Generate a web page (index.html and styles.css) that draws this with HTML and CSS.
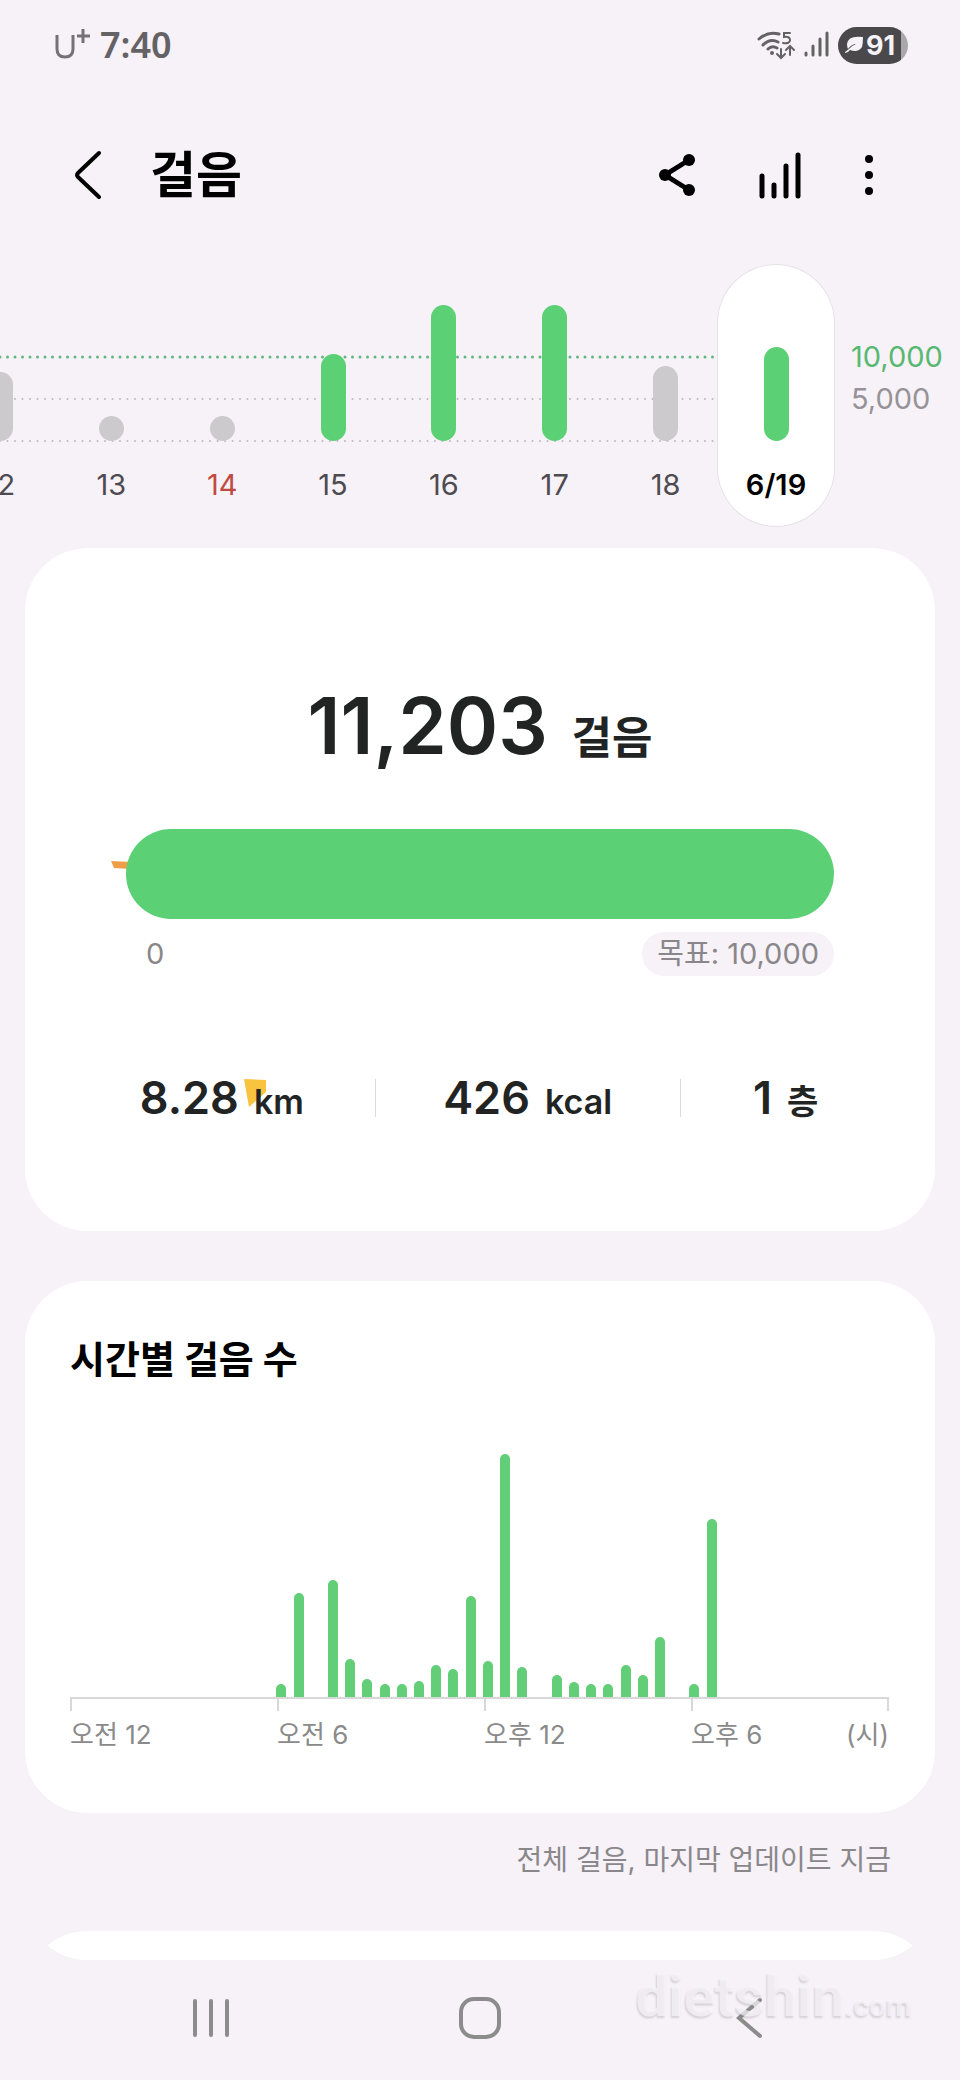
FILE: index.html
```
<!DOCTYPE html>
<html lang="ko">
<head>
    <meta charset="UTF-8">
    <meta name="viewport" content="width=device-width, initial-scale=1.0">
    <title>걸음</title>
    <link rel="stylesheet" href="styles.css">
</head>
<body>

    <!-- 상태 표시줄 -->
    <div class="status">
        <svg class="carrier" width="36" height="34" viewBox="0 0 36 34" role="img" aria-label="U+">
            <path d="M3 7v14q0 8 8 8t8-8V7M23 8h13M29 1v14"/>
        </svg>
        <span class="clock">7:40</span>
        <div class="status-icons">
            <svg width="38" height="32" viewBox="0 0 38 32" aria-hidden="true">
                <path class="line" d="M2 10Q11 2 22 5M6 16Q13 9 21 13M11 20Q15 16 20 19"/>
                <circle cx="15" cy="24" r="2"/>
                <path class="line thin" d="M33 4h-6v4q6-1 6 3t-7 3M24 20v8M20 25l4 4l4-4M33 26v-8M29 21l4-4l4 4"/>
            </svg>
            <svg width="25" height="32" viewBox="0 0 25 32" aria-hidden="true">
                <path class="line" d="M2 24v2M9 17v9M16 10v16M23 4v22"/>
            </svg>
            <div class="battery">
                <svg width="20" height="18" viewBox="0 0 20 18" aria-hidden="true">
                    <path class="leaf" d="M19 1Q4-1 3 8q0 3 1 5Q8 8 12 8Q7 10 5 13L1 16v1q3 0 5-3q8 3 12-3q1-4 1-10z"/>
                </svg>
                <span>91</span>
            </div>
        </div>
    </div>

    <!-- 상단 헤더 -->
    <header class="header">
        <button class="icon-button" type="button" aria-label="뒤로">
            <svg width="28" height="50" viewBox="0 0 28 50"><path class="stroke" d="M25 3L4 23q-2 2 0 4L25 47"/></svg>
        </button>
        <h1>걸음</h1>
        <div class="actions">
            <button class="icon-button" type="button" aria-label="공유">
                <svg width="40" height="50" viewBox="0 0 40 50">
                    <path class="stroke bars" d="M32 10L8 25l24 15"/>
                    <circle cx="32" cy="10" r="6"/><circle cx="8" cy="25" r="6"/><circle cx="32" cy="40" r="6"/>
                </svg>
            </button>
            <button class="icon-button" type="button" aria-label="차트">
                <svg width="42" height="50" viewBox="0 0 42 50"><path class="stroke bars" d="M3 26v20M15 35v11M27 16v30M39 5v41"/></svg>
            </button>
            <button class="icon-button" type="button" aria-label="더보기">
                <svg width="12" height="50" viewBox="0 0 12 50">
                    <circle cx="6" cy="9" r="4"/><circle cx="6" cy="25" r="4"/><circle cx="6" cy="41" r="4"/>
                </svg>
            </button>
        </div>
    </header>

    <!-- 일별 걸음 수 -->
    <section class="week">
        <svg class="week-lines" aria-hidden="true">
            <line class="goal" x1="0" y1="92" x2="100%" y2="92"/>
            <line x1="0" y1="134" x2="100%" y2="134"/>
            <line x1="0" y1="176" x2="100%" y2="176"/>
        </svg>
        <div class="days">
            <button class="day" type="button"><span class="day-bar" style="height: 69px"></span>12</button>
            <button class="day" type="button"><span class="day-bar" style="height: 25px"></span>13</button>
            <button class="day sunday" type="button"><span class="day-bar" style="height: 25px"></span>14</button>
            <button class="day" type="button"><span class="day-bar done" style="height: 87px"></span>15</button>
            <button class="day" type="button"><span class="day-bar done" style="height: 136px"></span>16</button>
            <button class="day" type="button"><span class="day-bar done" style="height: 136px"></span>17</button>
            <button class="day" type="button"><span class="day-bar" style="height: 75px"></span>18</button>
            <button class="day selected" type="button"><span class="day-bar done" style="height: 94px"></span>6/19</button>
        </div>
        <div class="week-scale">
            <span class="goal-text">10,000</span>
            <span>5,000</span>
        </div>
    </section>

    <!-- 카드 영역 -->
    <main class="cards">
        <section class="card summary">
            <p class="total">11,203 <span>걸음</span></p>
            <div class="progress">
                <svg class="confetti" width="20" height="10" viewBox="0 0 20 10" aria-hidden="true"><path d="M0 1L20 2v7L3 8z"/></svg>
                <div class="progress-bar"></div>
            </div>
            <div class="range">
                <span>0</span>
                <span class="target">목표: 10,000</span>
            </div>
            <div class="stats">
                <div class="stat">
                    <svg class="confetti yellow" width="22" height="29" viewBox="0 0 22 29" aria-hidden="true"><path d="M0 0L22 1V13L5 28z"/></svg>
                    <b>8.28</b><span>km</span>
                </div>
                <div class="stat"><b>426</b><span>kcal</span></div>
                <div class="stat"><b>1</b><span>층</span></div>
            </div>
        </section>

        <section class="card hourly">
            <h2>시간별 걸음 수</h2>
            <div class="chart" id="chart"></div>
            <div class="axis">
                <span>오전 12</span>
                <span>오전 6</span>
                <span>오후 12</span>
                <span class="axis-end">오후 6<em>(시)</em></span>
            </div>
        </section>

        <p class="updated">전체 걸음, 마지막 업데이트 지금</p>

        <section class="card next"></section>
    </main>

    <!-- 하단 내비게이션 -->
    <nav class="navbar">
        <button type="button" aria-label="최근 앱">
            <svg width="44" height="44" viewBox="0 0 44 44"><path d="M6 5v34M22 5v34M38 5v34"/></svg>
        </button>
        <button type="button" aria-label="홈">
            <svg width="44" height="44" viewBox="0 0 44 44"><rect x="3" y="3" width="38" height="38" rx="13"/></svg>
        </button>
        <button type="button" aria-label="뒤로">
            <svg width="44" height="44" viewBox="0 0 44 44"><path d="M33 4L12 22l21 18"/></svg>
        </button>
    </nav>

    <div class="watermark">dietshin<small>.com</small></div>

    <script>
        // 30분 단위 막대 높이 (하루 48칸)
        const steps = [
            0, 0, 0, 0, 0, 0, 0, 0, 0, 0, 0, 0,
            13, 104, 0, 117, 38, 18, 13, 13, 16, 32, 28, 101,
            36, 243, 30, 0, 22, 15, 13, 13, 32, 22, 60, 0,
            13, 178, 0, 0, 0, 0, 0, 0, 0, 0, 0, 0
        ];
        const chart = document.getElementById("chart");
        steps.forEach(function (height) {
            const bar = document.createElement("i");
            bar.style.height = height + "px";
            chart.appendChild(bar);
        });
    </script>

</body>
</html>
```
FILE: styles.css
```
/* 공통 */
* {
    box-sizing: border-box;
}

body {
    margin: 0;
    height: 100vh;
    display: flex;
    flex-direction: column;
    position: relative;
    overflow: hidden;
    background-color: #f6f2f7;
    color: #000;
    font-family: Inter, "Noto Sans CJK KR", sans-serif;
    font-size: 29px;
}

h1, h2, p {
    margin: 0;
}

button {
    border: none;
    padding: 0;
    background: none;
    color: inherit;
    font: inherit;
    cursor: pointer;
}

svg {
    display: block;
}

/* 상태 표시줄 */
.status {
    display: flex;
    align-items: center;
    height: 90px;
    padding: 0 52px 0 54px;
    color: #656266;
    flex-shrink: 0;
}

.carrier {
    fill: none;
    stroke: #757276;
    stroke-width: 3;
}

.clock {
    margin-left: 10px;
    font-family: "Noto Sans", sans-serif;
    font-size: 36px;
    font-weight: 600;
    line-height: 40px;
}

.status-icons {
    display: flex;
    align-items: center;
    gap: 9px;
    margin-left: auto;
    fill: #656266;
}

.line {
    fill: none;
    stroke: #656266;
    stroke-width: 3;
    stroke-linecap: round;
}

.thin {
    stroke-width: 2;
}

.battery {
    display: flex;
    align-items: center;
    gap: 2px;
    width: 70px;
    height: 37px;
    padding-left: 6px;
    border-radius: 19px;
    background: linear-gradient(to right, #4a484a 90%, #aaa7aa 90%);
    color: #f6f2f7;
    font-size: 27px;
    font-weight: 700;
}

.leaf {
    fill: #f6f2f7;
}

/* 상단 헤더 */
.header {
    display: flex;
    align-items: center;
    height: 170px;
    padding: 0 85px 0 74px;
    flex-shrink: 0;
}

.header h1 {
    margin-left: 48px;
    font-size: 50px;
    font-weight: 700;
    line-height: 60px;
}

.actions {
    display: flex;
    gap: 62px;
    margin-left: auto;
}

.stroke {
    fill: none;
    stroke: #000;
    stroke-width: 4;
    stroke-linecap: round;
}

.bars {
    stroke-width: 5;
}

/* 일별 걸음 수 */
.week {
    position: relative;
    display: flex;
    height: 261px;
    margin: 5px 0 22px;
    flex-shrink: 0;
}

.week-lines {
    position: absolute;
    left: 0;
    top: 0;
    width: calc(100% - 240px);
    height: 100%;
    stroke: #bcb8bd;
    stroke-width: 2;
    stroke-linecap: round;
    stroke-dasharray: 0 7.5;
}

.week-lines .goal {
    stroke: #62b680;
    stroke-width: 3;
}

.days {
    position: relative;
    display: flex;
    flex: 1;
    margin-left: -55px;
}

.day {
    display: flex;
    flex: 1;
    flex-direction: column;
    align-items: center;
    justify-content: flex-end;
    padding-bottom: 23px;
    color: #4d4a50;
    line-height: 36px;
}

.day-bar {
    width: 25px;
    margin-bottom: 26px;
    border-radius: 13px;
    background-color: #cdcacd;
}

.done {
    background-color: #5cd075;
}

.sunday {
    color: #c04a42;
}

.selected {
    flex: 0 0 116px;
    margin: 0 -3px;
    border-radius: 58px;
    background-color: #fff;
    box-shadow: 0 0 0 1px #e6e2e7;
    color: #000;
    font-weight: 600;
}

.week-scale {
    display: flex;
    flex-direction: column;
    width: 129px;
    padding: 71px 0 0 20px;
    color: #969297;
    line-height: 42px;
}

.goal-text {
    color: #57b871;
}

/* 카드 */
.cards {
    flex: 1;
    min-height: 0;
    margin: 0 25px;
    overflow-y: auto;
    scrollbar-width: none;
    border-radius: 62px;
}

.card {
    border-radius: 62px;
    background-color: #fff;
}

.summary {
    padding: 131px 44px 102px;
    color: #222423;
}

.total {
    text-align: center;
    font-size: 78px;
    font-weight: 600;
    line-height: 94px;
}

.total span {
    margin-left: 4px;
    font-size: 44px;
    line-height: 44px;
}

.progress {
    position: relative;
    margin: 56px 57px 13px;
}

.progress-bar {
    position: relative;
    height: 90px;
    border-radius: 45px;
    background-color: #5cd075;
}

.confetti {
    position: absolute;
    left: -15px;
    top: 31px;
    fill: #ee9e48;
}

.range {
    display: flex;
    justify-content: space-between;
    margin: 0 57px 95px;
    padding-left: 20px;
    color: #8a878b;
    line-height: 44px;
}

.target {
    padding: 0 15px;
    border-radius: 22px;
    background-color: #f6f2f7;
}

.stats {
    display: grid;
    grid-template-columns: 61fr 61fr 42fr;
    line-height: 54px;
}

.stat {
    position: relative;
    display: flex;
    align-items: baseline;
    justify-content: center;
    gap: 15px;
    font-size: 34px;
    font-weight: 600;
}

.stat b {
    font-size: 45px;
    font-weight: 600;
}

.stat span {
    position: relative;
}

/* 구분선 */
.stat + .stat::before {
    content: "";
    position: absolute;
    left: 0;
    top: 8px;
    height: 38px;
    border-left: 1px solid #dcdadd;
}

.yellow {
    left: 175px;
    top: 8px;
    fill: #f8c440;
}

/* 시간별 걸음 수 */
.hourly {
    margin-top: 50px;
    padding: 52px 46px 60px 45px;
}

.hourly h2 {
    font-size: 38px;
    font-weight: 700;
    line-height: 52px;
}

.chart {
    display: flex;
    align-items: flex-end;
    justify-content: space-between;
    height: 312px;
}

.chart i {
    width: 10px;
    border-radius: 5px 5px 0 0;
    background-color: #62cf78;
}

.axis {
    display: grid;
    grid-template-columns: 23fr 23fr 23fr 22fr;
    border-top: 2px solid #d8d8d8;
    color: #8a8a8a;
    font-size: 26px;
    line-height: 36px;
}

/* 눈금 */
.axis span::before {
    content: "";
    display: block;
    height: 12px;
    margin-bottom: 6px;
    border-left: 2px solid #d8d8d8;
}

.axis-end {
    display: flex;
    flex-wrap: wrap;
    justify-content: space-between;
}

.axis .axis-end::before {
    width: 100%;
    border-right: 2px solid #d8d8d8;
}

.axis em {
    font-style: normal;
}

.updated {
    padding: 26px 44px 50px;
    text-align: right;
    color: #8a878b;
    font-size: 28px;
    line-height: 42px;
}

.next {
    height: 140px;
}

/* 하단 내비게이션 */
.navbar {
    display: flex;
    height: 120px;
    padding: 0 77px 4px;
    flex-shrink: 0;
}

.navbar button {
    display: flex;
    flex: 1;
    align-items: center;
    justify-content: center;
}

.navbar svg {
    fill: none;
    stroke: #8c8c8c;
    stroke-width: 4;
    stroke-linecap: round;
}

/* 워터마크 */
.watermark {
    position: absolute;
    right: 48px;
    bottom: 34px;
    color: rgba(250, 246, 251, 0.7);
    font-family: Roboto, sans-serif;
    font-size: 58px;
    font-weight: 700;
    line-height: 80px;
    text-shadow: -1px 2px 2px rgba(120, 110, 120, 0.25);
    pointer-events: none;
}

.watermark small {
    font-size: 30px;
}
```
